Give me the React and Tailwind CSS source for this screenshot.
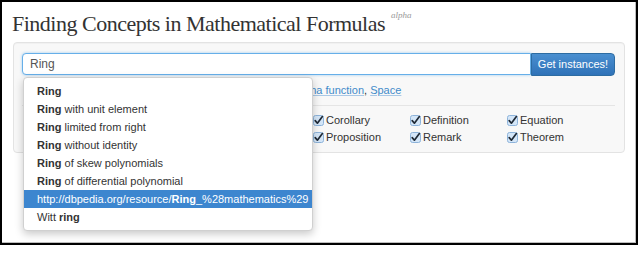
import { useState } from "react";

const sans = "font-['Helvetica_Neue','Liberation_Sans',Arial,sans-serif]";

const suggestions = [
    { bold: "Ring", rest: "" },
    { bold: "Ring", rest: " with unit element" },
    { bold: "Ring", rest: " limited from right" },
    { bold: "Ring", rest: " without identity" },
    { bold: "Ring", rest: " of skew polynomials" },
    { bold: "Ring", rest: " of differential polynomial" },
    { pre: "http://dbpedia.org/resource/", bold: "Ring", rest: "_%28mathematics%29", active: true },
    { pre: "Witt ", bold: "ring", rest: "" },
];

const kinds = [
    "Axiom", "Conjecture", "Claim", "Corollary", "Definition", "Equation",
    "Example", "Lemma", "Notation", "Proposition", "Remark", "Theorem",
];

const examples = ["Ring", "Group", "Vector space", "Field", "Integer", "Gamma function", "Space"];

function Check() {
    return (
        <svg width="11" height="11" viewBox="0 0 11 11" className="shrink-0">
            <rect x="0.5" y="0.5" width="10" height="10" rx="2" fill="#d4e6f8" stroke="#8db3da" />
            <path d="M2.2 5.6 L4.4 8.2 L9.4 1.6" fill="none" stroke="#1f2a36" strokeWidth="1.7" strokeLinecap="round" strokeLinejoin="round" />
        </svg>
    );
}

export default function App() {
    const [query, setQuery] = useState("Ring");

    return (
        <div className={`w-[640px] h-[269px] overflow-hidden bg-white ${sans}`}>
            <div className="relative w-[638px] h-[245px] border-2 border-black shadow-[inset_-1px_-1px_0_#bdbdbd] pt-[7px] pl-[10px]">
                <h1 className="font-['Liberation_Serif',Georgia,serif] text-[22px] tracking-[-0.5px] leading-[30px] text-[#333]">
                    Finding Concepts in Mathematical Formulas
                    <sup className="ml-[6px] text-[9px] tracking-normal italic text-[#999] align-[9px]">alpha</sup>
                </h1>

                <div className="mt-[3px] ml-[1px] w-[612px] h-[111px] border border-[#e3e3e3] rounded-[4px] bg-[#f8f8f8] shadow-[inset_0_1px_1px_rgba(0,0,0,0.03)] pt-[10px] pl-[8px]">
                    <div className="flex h-[22px] w-[593px]">
                        <input
                            value={query}
                            onChange={(e) => setQuery(e.target.value)}
                            className="flex-1 h-full border border-[#66afe9] rounded-l-[4px] bg-white px-[7px] text-[12px] text-[#555] outline-none shadow-[0_0_3px_rgba(102,175,233,0.6)]"
                        />
                        <button className="w-[84px] h-[23px] rounded-r-[4px] border border-[#2d6ca2] bg-gradient-to-b from-[#4a8fd0] to-[#2f72b8] text-white text-[11px] font-medium">
                            Get instances!
                        </button>
                    </div>

                    <div className="mt-[8px] h-[14px] pl-[2px] text-[11px] leading-[14px] text-[#333] whitespace-nowrap">
                        Examples:{" "}
                        {examples.map((ex, i) => (
                            <span key={ex}>
                                <a className="text-[#428bca] underline decoration-[#a9c8e6]">{ex}</a>
                                {i < examples.length - 1 ? ", " : ""}
                            </span>
                        ))}
                    </div>

                    <div className="mt-[8px] w-[593px] border-t border-[#e5e5e5]" />

                    <div className="mt-[8px] pl-[6px] grid grid-cols-[91px_97px_97px_97px_97px_97px] gap-y-[4px] text-[11px] leading-[13px] text-[#333]">
                        {kinds.map((k) => (
                            <label key={k} className="flex items-center gap-[2px]">
                                <Check />
                                <span>{k}</span>
                            </label>
                        ))}
                    </div>
                </div>

                <ul className="absolute left-[21px] top-[75px] w-[290px] py-[4px] bg-white border border-[#d0d0d0] rounded-[4px] shadow-[0_3px_8px_rgba(0,0,0,0.22)] text-[11px] text-[#333]">
                    {suggestions.map((s, i) => (
                        <li
                            key={i}
                            className={`h-[18px] leading-[18px] px-[13px] whitespace-nowrap ${s.active ? "bg-[#3d86cf] text-white" : ""}`}
                        >
                            {s.pre}
                            <b className="font-bold">{s.bold}</b>
                            {s.rest}
                        </li>
                    ))}
                </ul>
            </div>

            <p className="mt-[21px] pl-[12px] font-['Liberation_Serif',serif] text-[17px] leading-[20px] text-[#777] whitespace-nowrap">
                Screenshot of the initial search interface with the autocompletion list for the query Ring shown
            </p>
        </div>
    );
}
